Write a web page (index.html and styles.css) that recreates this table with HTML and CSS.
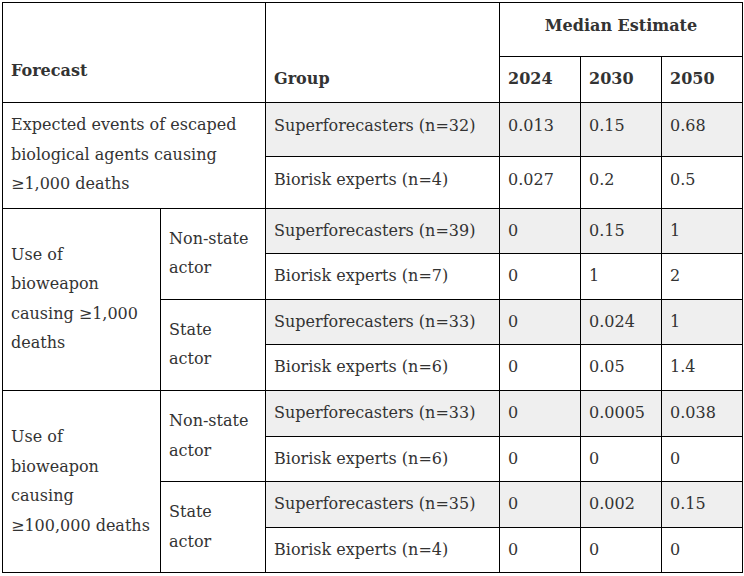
FILE: index.html
```html
<!DOCTYPE html>
<html lang="en">
<head>
<meta charset="utf-8">
<title>Forecast table</title>
<link rel="stylesheet" href="styles.css">
</head>
<body>
<table class="forecast-table">
  <colgroup>
    <col class="c-forecast-a">
    <col class="c-forecast-b">
    <col class="c-group">
    <col class="c-year">
    <col class="c-year">
    <col class="c-year">
  </colgroup>
  <thead>
    <tr class="head-top">
      <th colspan="2" rowspan="2" class="th-forecast">Forecast</th>
      <th rowspan="2" class="th-group">Group</th>
      <th colspan="3" class="th-median">Median Estimate</th>
    </tr>
    <tr>
      <th class="th-year">2024</th>
      <th class="th-year">2030</th>
      <th class="th-year">2050</th>
    </tr>
  </thead>
  <tbody>
    <tr class="shade tall-a">
      <td colspan="2" rowspan="2" class="forecast">Expected events of escaped biological agents causing ≥1,000 deaths</td>
      <td class="top">Superforecasters (n=32)</td>
      <td class="top">0.013</td>
      <td class="top">0.15</td>
      <td class="top">0.68</td>
    </tr>
    <tr class="tall-b">
      <td class="top">Biorisk experts (n=4)</td>
      <td class="top">0.027</td>
      <td class="top">0.2</td>
      <td class="top">0.5</td>
    </tr>
    <tr class="shade">
      <td rowspan="4" class="forecast">Use of bioweapon causing ≥1,000 deaths</td>
      <td rowspan="2" class="actor">Non-state actor</td>
      <td>Superforecasters (n=39)</td>
      <td>0</td>
      <td>0.15</td>
      <td>1</td>
    </tr>
    <tr>
      <td>Biorisk experts (n=7)</td>
      <td>0</td>
      <td>1</td>
      <td>2</td>
    </tr>
    <tr class="shade">
      <td rowspan="2" class="actor">State actor</td>
      <td>Superforecasters (n=33)</td>
      <td>0</td>
      <td>0.024</td>
      <td>1</td>
    </tr>
    <tr>
      <td>Biorisk experts (n=6)</td>
      <td>0</td>
      <td>0.05</td>
      <td>1.4</td>
    </tr>
    <tr class="shade">
      <td rowspan="4" class="forecast">Use of bioweapon causing ≥100,000 deaths</td>
      <td rowspan="2" class="actor">Non-state actor</td>
      <td>Superforecasters (n=33)</td>
      <td>0</td>
      <td>0.0005</td>
      <td>0.038</td>
    </tr>
    <tr>
      <td>Biorisk experts (n=6)</td>
      <td>0</td>
      <td>0</td>
      <td>0</td>
    </tr>
    <tr class="shade">
      <td rowspan="2" class="actor">State actor</td>
      <td>Superforecasters (n=35)</td>
      <td>0</td>
      <td>0.002</td>
      <td>0.15</td>
    </tr>
    <tr>
      <td>Biorisk experts (n=4)</td>
      <td>0</td>
      <td>0</td>
      <td>0</td>
    </tr>
  </tbody>
</table>
</body>
</html>
```
FILE: styles.css
```css
html, body {
  margin: 0;
  padding: 0;
  background: #ffffff;
}

body {
  padding: 2px;
  font-family: "DejaVu Serif", "Liberation Serif", serif;
  font-size: 16px;
  line-height: 29.6px;
  color: #333333;
}

.forecast-table {
  border-collapse: collapse;
  table-layout: fixed;
  width: 740px;
  border: 1px solid #000;
}

.c-forecast-a { width: 158px; }
.c-forecast-b { width: 105px; }
.c-group { width: 234px; }
.c-year { width: 81px; }

.forecast-table th,
.forecast-table td {
  border: 1px solid #000;
  padding: 7px 8px 8px;
  text-align: left;
  vertical-align: middle;
  font-weight: normal;
}

.forecast-table th {
  font-weight: bold;
  color: #333333;
}

.head-top {
  height: 54px;
}

.tall-a {
  height: 54px;
}

.tall-b {
  height: 52px;
}

.forecast-table .th-forecast {
  vertical-align: bottom;
  padding-bottom: 16px;
}

.forecast-table .th-group {
  vertical-align: bottom;
}

.forecast-table .th-median {
  text-align: center;
  vertical-align: top;
  padding-top: 8px;
}

.forecast-table .top {
  vertical-align: top;
  padding-top: 8px;
}

.shade td:not(.forecast):not(.actor) {
  background: #efefef;
}
```
